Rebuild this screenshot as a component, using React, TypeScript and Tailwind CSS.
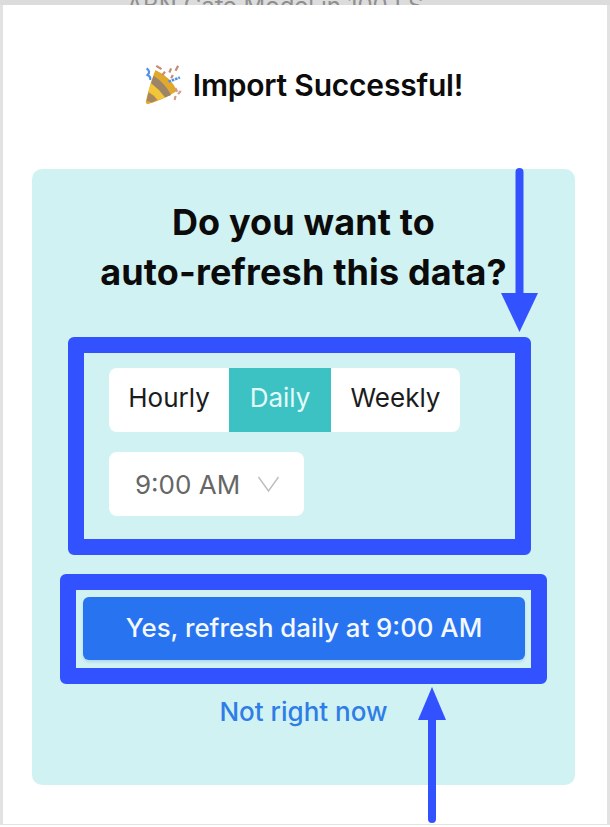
const font = { fontFamily: 'Inter, "Liberation Sans", sans-serif' };

// Party popper, drawn because no emoji font is available
function Popper() {
  return (
    <svg width="42" height="40" viewBox="0 0 48 48" preserveAspectRatio="none" className="shrink-0">
      <path d="M13 6 Q30 14 38 31 Q22 42 4 47 Q2 46 2 44 Q7 22 13 6Z" fill="#e0a92e" />
      <path d="M11 13 Q24 22 31 36 L24 39 Q17 29 8 22Z" fill="#9c8468" />
      <path d="M8 22 Q17 29 24 39 L16 42 Q11 35 5 32Z" fill="#f2c63a" />
      <path d="M5 33 Q11 36 15 42 L9 45 L3 43Z" fill="#a8875f" />
      <path d="M28 20 L41 15" stroke="#4f8fe8" strokeWidth="3" strokeDasharray="3 1" />
      <path d="M3 4 Q8 8 4 12 Q8 14 7 18" stroke="#4f8fe8" strokeWidth="2.5" fill="none" />
      <path d="M14 1 L20 5 M21 12 L24 8 M31 4 L29 9 M39 1 L36 7 M33 12 L31 16" stroke="#c98a72" strokeWidth="2.5" />
      <path d="M36 28 L38 32 M36 37 L35 42 M42 31 L39 35" stroke="#d59a8a" strokeWidth="2.5" />
    </svg>
  );
}

export default function App() {
  return (
    <div className="relative h-[827px] w-[610px] overflow-hidden bg-white" style={font}>
      <div className="flex h-[5px] items-end justify-center overflow-hidden bg-[#dcdcdc]">
        <span className="pr-[60px] text-[24px] leading-[24px] text-[#8f8f8f] translate-y-[13px]">ABN Cafe Model in 100 LS</span>
      </div>
      <div className="h-[820px] border-x-[3px] border-b border-[#e2e2e2] pr-[32px] pl-[29px]">
        <div className="flex h-[164px] items-start justify-center pt-[60px]">
          <div className="flex items-center gap-[7px]">
            <Popper />
            <h1 className="text-[30px] leading-[36px] font-semibold tracking-[-0.2px] text-[#0c0c0c]">Import Successful!</h1>
          </div>
        </div>

        <div className="h-[616px] rounded-[10px] bg-[#d1f2f2]">
          <h2 className="pt-[28px] text-center text-[36px] leading-[50px] font-bold tracking-[0.15px] text-[#0b0b0b]">
            Do you want to
            <br />
            auto-refresh this data?
          </h2>

          <div className="mt-[40px] ml-[36px] h-[218px] w-[463px] rounded-[6px] border-[16px] border-[#3352ff] pt-[15px] pl-[25px]">
            <div className="flex h-[64px] w-[351px] overflow-hidden rounded-[8px] bg-white text-[26px] text-[#1c1c1c]">
              <div className="flex w-[120px] items-center justify-center pb-[6px]">Hourly</div>
              <div className="flex w-[102px] items-center justify-center bg-[#3cc2c2] pb-[6px] text-[#e4fafa]">Daily</div>
              <div className="flex flex-1 items-center justify-center pb-[6px]">Weekly</div>
            </div>
            <div className="mt-[20px] flex h-[64px] w-[195px] items-center rounded-[8px] bg-white pl-[26px] text-[26px] text-[#666666]">
              9:00 AM
              <svg width="23" height="18" viewBox="0 0 23 18" className="ml-[17px]">
                <path d="M1.5 2 L11.5 16 L21.5 2" fill="none" stroke="#bdbdbd" strokeWidth="1.4" />
              </svg>
            </div>
          </div>

          <div className="mt-[19px] ml-[28px] h-[110px] w-[487px] rounded-[6px] border-[16px] border-[#3352ff] pt-[7px] pl-[7px]">
            <button className="flex h-[63px] w-[442px] items-center justify-center rounded-[6px] bg-[#2874f0] pb-[1px] text-[25.8px] font-medium text-[#f4f9ff] shadow-[0_2px_3px_rgba(40,116,240,0.2)]">
              Yes, refresh daily at 9:00 AM
            </button>
          </div>

          <div className="mt-[10px] text-center text-[26px] leading-[36px] font-medium text-[#2f7de6]">Not right now</div>
        </div>
      </div>

      {/* annotation arrows over the screenshot */}
      <svg width="37" height="164" viewBox="0 0 37 164" className="absolute top-[168px] left-[501px]">
        <path d="M18.5 4 V130" stroke="#3352ff" strokeWidth="8" strokeLinecap="round" />
        <path d="M0 125 H37 L18.5 164Z" fill="#3352ff" />
      </svg>
      <svg width="28" height="136" viewBox="0 0 28 136" className="absolute top-[687px] left-[418px]">
        <path d="M14 30 V132" stroke="#3352ff" strokeWidth="8" strokeLinecap="round" />
        <path d="M0 33 H28 L14 0Z" fill="#3352ff" />
      </svg>
    </div>
  );
}
